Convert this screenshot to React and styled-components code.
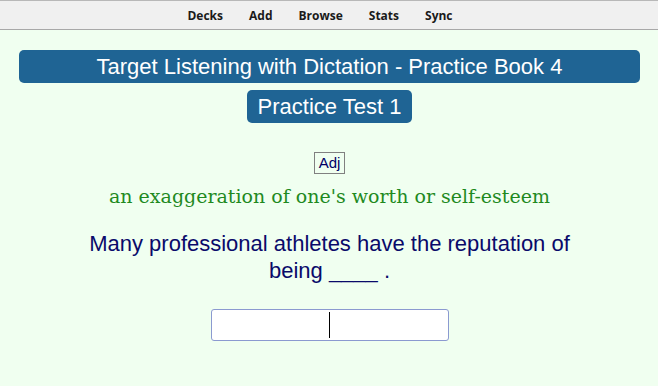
import React from 'react';
import styled, { createGlobalStyle } from 'styled-components';

const GlobalStyle = createGlobalStyle`
  html, body {
    margin: 0;
    padding: 0;
    background: #f0fff0;
  }
`;

const Page = styled.div`
  width: 658px;
  height: 386px;
  background: #f0fff0;
  overflow: hidden;
`;

const TopBar = styled.nav`
  height: 30px;
  box-sizing: border-box;
  background: #f0f0f0;
  border-top: 1px solid #b8b8b8;
  border-bottom: 1px solid #a8a8a8;
  display: flex;
  justify-content: center;
  align-items: center;
  gap: 26px;
  padding-right: 18px;
`;

const MenuItem = styled.span`
  font-family: 'Open Sans', 'Noto Sans', sans-serif;
  font-weight: 700;
  font-size: 12px;
  color: #1a1a1a;
`;

const Card = styled.main`
  display: flex;
  flex-direction: column;
  align-items: center;
  padding: 20px 18px 0 19px;
  font-family: 'Liberation Sans', Arial, sans-serif;
`;

const Banner = styled.div`
  background: #1f6494;
  color: #fff;
  border-radius: 5px;
  font-size: 22px;
  line-height: 33px;
  text-align: center;
  width: ${(p) => (p.$wide ? '100%' : 'auto')};
  padding: 0 ${(p) => (p.$wide ? '0' : '11px')};
  margin-bottom: 7px;
`;

const Tag = styled.span`
  margin-top: 22px;
  border: 1px solid #808080;
  color: #000066;
  font-size: 15px;
  line-height: 20px;
  padding: 0 4px;
`;

const Definition = styled.div`
  margin-top: 9px;
  color: #1f8a1f;
  font-family: 'DejaVu Serif', Georgia, serif;
  font-size: 19px;
  line-height: 26px;
`;

const Sentence = styled.p`
  margin: 21px 0 0;
  width: 510px;
  text-align: center;
  color: #0a0a6a;
  font-size: 22px;
  line-height: 27px;
`;

const Answer = styled.div`
  margin-top: 25px;
  width: 238px;
  height: 32px;
  box-sizing: border-box;
  background: #fff;
  border: 1px solid #8b9ad0;
  border-radius: 3px;
  display: flex;
  justify-content: center;
  align-items: center;
`;

const Caret = styled.span`
  width: 1px;
  height: 26px;
  background: #000;
`;

export default function App() {
  return (
    <Page>
      <GlobalStyle />
      <TopBar>
        <MenuItem>Decks</MenuItem>
        <MenuItem>Add</MenuItem>
        <MenuItem>Browse</MenuItem>
        <MenuItem>Stats</MenuItem>
        <MenuItem>Sync</MenuItem>
      </TopBar>
      <Card>
        <Banner $wide>Target Listening with Dictation - Practice Book 4</Banner>
        <Banner>Practice Test 1</Banner>
        <Tag>Adj</Tag>
        <Definition>an exaggeration of one's worth or self-esteem</Definition>
        <Sentence>Many professional athletes have the reputation of being ____ .</Sentence>
        <Answer>
          <Caret />
        </Answer>
      </Card>
    </Page>
  );
}
